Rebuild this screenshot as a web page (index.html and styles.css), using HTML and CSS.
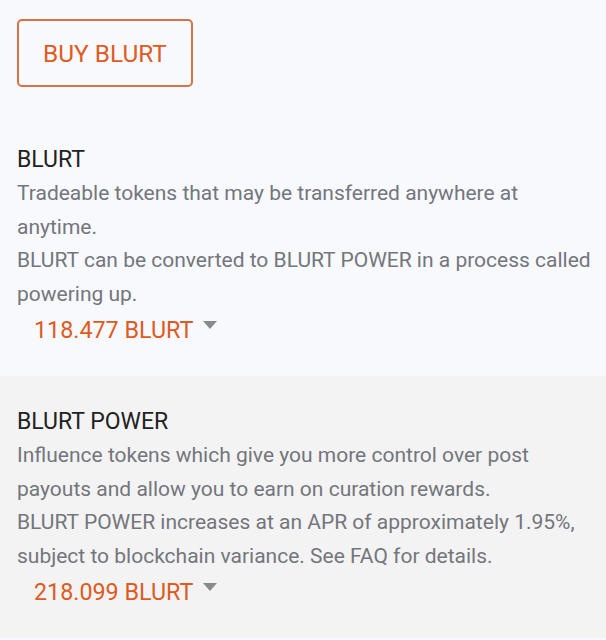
FILE: index.html
```html
<!DOCTYPE html>
<html lang="en">
  <head>
    <meta charset="UTF-8" />
    <meta name="viewport" content="width=device-width, initial-scale=1.0" />
    <title>Wallet</title>
    <link rel="stylesheet" href="styles.css">
  </head>
  <body>
    <div class="actions">
      <button type="button" class="buy-btn">BUY BLURT</button>
    </div>

    <div class="token">
      <div class="token-title">BLURT</div>
      <div class="token-desc">
        Tradeable tokens that may be transferred anywhere at anytime.<br />
        BLURT can be converted to BLURT POWER in a process called powering up.
      </div>
      <div class="token-amount">
        118.477 BLURT <span class="caret"></span>
      </div>
    </div>

    <div class="token token-alt">
      <div class="token-title">BLURT POWER</div>
      <div class="token-desc">
        Influence tokens which give you more control over post payouts and allow you to earn on curation rewards.<br />
        BLURT POWER increases at an APR of approximately 1.95%, subject to blockchain variance. See FAQ for details.
      </div>
      <div class="token-amount">
        218.099 BLURT <span class="caret"></span>
      </div>
    </div>
  </body>
</html>
```

FILE: styles.css
```css
body {
  font-family: Roboto, "Noto Sans", sans-serif;
  margin: 0;
  padding: 0;
  background-color: #f8f9fd;
  min-height: 640px;
}

.actions {
  padding: 19px 17px 27px;
}

.buy-btn {
  width: 176px;
  height: 68px;
  border: 2px solid #d4734b;
  border-radius: 5px;
  background: transparent;
  color: #e05a22;
  font-family: inherit;
  font-size: 24.4px;
  padding: 0;
  cursor: pointer;
}

.token {
  padding: 29px 8px 28px 17px;
}

.token-alt {
  background-color: #f3f3f4;
}

.token-title {
  font-size: 23px;
  line-height: 34px;
  color: #222;
}

.token-desc {
  font-size: 21px;
  line-height: 33.5px;
  color: #73767b;
}

.token-amount {
  margin-top: 1px;
  padding-left: 17px;
  font-size: 23.3px;
  line-height: 36px;
  color: #df5a21;
}

.caret {
  display: inline-block;
  width: 0;
  height: 0;
  margin-left: 4px;
  border-left: 7px solid transparent;
  border-right: 7px solid transparent;
  border-top: 8px solid #8a8a8a;
  vertical-align: 9px;
}
```
